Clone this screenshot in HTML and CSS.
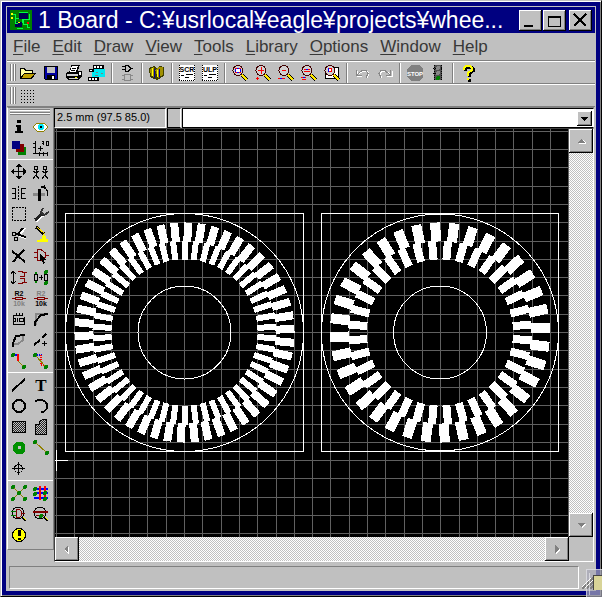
FILE: index.html
```html
<!DOCTYPE html>
<html lang="en">
<head>
<meta charset="utf-8">
<title>1 Board</title>
<link rel="stylesheet" href="styles.css">
</head>
<body>
<div class="window">
<div class="frame">
<header class="titlebar">
  <svg class="app-icon" viewBox="0 0 22 20"><path fill="#008000" d="M0 0h22v20H0z"/><path fill="#000050" d="M9 3h9v6H9zM5 12h7v5H5z"/><path fill="none" stroke="#00ff40" d="M2 4h3v9h3M9 2h9M19 4v5h-6v5h4v3h3M5 8h4M12 9v4M7 18h6"/><path fill="#ff0" d="M1 3h2v2H1zM1 7h2v2H1zM8 12h2v1H8z"/><path fill="red" d="M17 12h2v2h-2z"/></svg>
  <h1>1 Board - C:¥usrlocal¥eagle¥projects¥whee...</h1>
  <div class="window-buttons">
    <button class="raised" aria-label="Minimize"><svg viewBox="0 0 23 21"><path stroke="#000" stroke-width="2" d="M5 16h9"/></svg></button>
    <button class="raised" aria-label="Maximize"><svg viewBox="0 0 23 21"><path d="M5 6h13v11H5z" fill="#000"/><path d="M6 8h11v8H6z" fill="#c0c0c0"/></svg></button>
    <button class="raised close" aria-label="Close"><svg viewBox="0 0 23 21"><path stroke="#000" stroke-width="2" d="M5 4l12 12M17 4L5 16"/></svg></button>
  </div>
</header>
<nav class="menubar">
  <a href="#"><u>F</u>ile</a><a href="#"><u>E</u>dit</a><a href="#"><u>D</u>raw</a><a href="#"><u>V</u>iew</a><a href="#"><u>T</u>ools</a><a href="#"><u>L</u>ibrary</a><a href="#"><u>O</u>ptions</a><a href="#"><u>W</u>indow</a><a href="#"><u>H</u>elp</a>
</nav>
<div class="toolbar">
  <span class="grip"></span>
  <div class="group">
    <button aria-label="Open"><svg viewBox="0 0 20 18"><path fill="#000" d="M2 4h5l1 2h7v3h3l-4 6H2z"/><path fill="#ffffa0" d="M3 5h3l1 2h7v2H6l-3 4z"/><path fill="#c0a000" d="M6 10h10l-3 4H4z"/></svg></button>
    <button aria-label="Save"><svg viewBox="0 0 20 18"><path fill="#000" d="M3 2h14v14H4l-1-1z"/><path fill="#0000a0" d="M4 3h12v12H4z"/><path fill="#c0c0c0" d="M6 3h8v6H6z"/><path fill="#000" d="M6 11h8v4H6z"/><path fill="#fff" d="M11 12h2v3h-2z"/></svg></button>
    <button aria-label="Print"><svg viewBox="0 0 20 18"><path fill="#000" d="M7 1h9l-2 6h4v6l-4 3H4l-2-3V9l4-2z"/><path fill="#fff" d="M8 2h6l-2 6H6z"/><path stroke="#000" d="M8 4h4M7 6h4"/><path fill="#d0d0d0" d="M3 10h11v2H3zM5 14h9v1H5z"/><path fill="#fff" d="M15 8h2v3h-2z"/><path fill="#ff0" d="M11 13h2v1h-2z"/></svg></button>
    <button aria-label="CAM"><svg viewBox="0 0 20 18"><path fill="#00e8f0" d="M5 5h13v8H5z"/><path fill="#000" d="M6 1h11v4H6zM2 5h5v3H2zM1 13h11v4H1z"/><path fill="#fff" d="M7 2h2v2H7zM10 2h2v2h-2zM13 2h2v2h-2zM3 6h2v1H3zM2 14h2v2H2zM5 14h2v2H5zM8 14h2v2H8z"/><path stroke="#808080" d="M9 8h2m3 1h2m-8 2h3"/></svg></button>
  </div>
  <div class="group">
    <button aria-label="Schematic"><svg viewBox="0 0 20 18"><path fill="none" stroke="#000" d="M8 1.500v6h3l3-3-3-3zM5 2.500h3M5 5.500h3M14 4.500h2"/><path fill="none" stroke="#888" d="M7.500 10.500h6v6h-6zM5 11.500h2M5 15.500h2M14 11.500h2M14 15.500h2"/></svg></button>
  </div>
  <div class="group">
    <button aria-label="Library"><svg viewBox="0 0 20 18"><path fill="#404000" d="M2 4l5-2 3 2 3-2 4 1v9l-7 4-7-3z"/><path fill="#a09000" d="M3 5l4-2v10l-3-1zM8 6l4-3h4v8l-5 3z"/><path stroke="#ff0" d="M5.500 4v8M10.500 6v7"/><path stroke="#0000a0" d="M7.500 5v9M12.500 5v8"/></svg></button>
  </div>
  <div class="group">
    <button aria-label="Script"><svg viewBox="0 0 20 18"><path fill="#fff" d="M2 1h16v16H2z"/><path stroke="#000" stroke-dasharray="1 1" fill="none" d="M2.500 1v16M17.500 1v16M2 16.500h16"/><text class="tiny" x="10" y="8">SCR</text><path stroke="#000" d="M4 11.500h3M9 10.500h7M8 13.500h4"/></svg></button>
    <button aria-label="User program"><svg viewBox="0 0 20 18"><path fill="#fff" d="M2 1h16v16H2z"/><path stroke="#000" stroke-dasharray="1 1" fill="none" d="M2.500 1v16M17.500 1v16M2 16.500h16"/><text class="tiny" x="10" y="8">ULP</text><path stroke="#000" d="M4 11.500h3M9 10.500h7M8 13.500h4"/></svg></button>
  </div>
  <div class="group">
    <button aria-label="Zoom to fit"><svg viewBox="0 0 20 18"><use href="#lens"/><path fill="#fff" stroke="#00f" d="M5.500 4.500h5v4h-5z"/><path stroke="red" d="M5 4.500h2m2 0h2M5 8.500h2m2 0h2"/></svg></button>
    <button aria-label="Zoom in"><svg viewBox="0 0 20 18"><use href="#lens"/><path stroke="red" d="M5 6.500h6M8.500 3v7M3 14.500h3M4.500 13v3"/></svg></button>
    <button aria-label="Zoom out"><svg viewBox="0 0 20 18"><use href="#lens"/><path stroke="red" d="M6 6.500h4M2 14.500h7"/><path stroke="#00f" d="M4 14.500h2"/></svg></button>
    <button aria-label="Redraw"><svg viewBox="0 0 20 18"><use href="#lens"/><path stroke="red" d="M5 5.500h6M5 7.500h6M2 13.500h5M3 15.500h4"/><path stroke="#00f" d="M7 5.500h2M4 13.500h2"/></svg></button>
    <button aria-label="Zoom select"><svg viewBox="0 0 20 18"><path fill="#fff" stroke="#000" d="M3.500 3.500h13v11h-13z"/><use href="#lens"/><path fill="#fff" stroke="red" d="M6.500 4.500h3v3h-3z"/><path stroke="#00f" d="M6.500 4v4"/></svg></button>
  </div>
  <div class="group">
    <button aria-label="Undo"><svg viewBox="0 0 20 18"><g fill="none"><path stroke="#fff" d="M5 7v5h5M7 10l4-3h4l2 3-2 4"/><path stroke="#888" d="M4.500 6v5h5M5 11l5-4.500h4l2 3-2 4"/></g></svg></button>
    <button aria-label="Redo"><svg viewBox="0 0 20 18"><g fill="none"><path stroke="#fff" d="M17 7v5h-5M15 10l-4-3H7l-2 3 2 4"/><path stroke="#888" d="M15.500 6v5h-5M15 11l-5-4.500H6l-2 3 2 4"/></g></svg></button>
  </div>
  <div class="group">
    <button aria-label="Stop"><svg viewBox="0 0 20 18"><path fill="#808080" d="M6 1h8l4 4v8l-4 4H6l-4-4V5z"/><text class="tiny light" x="10" y="12">STOP</text></svg></button>
    <button aria-label="Go"><svg viewBox="0 0 20 18"><path fill="#505050" d="M6 1h8v15H6z"/><path fill="none" stroke="#000" stroke-dasharray="1 1" d="M6.500 1v15M13.500 1v15M5 4.500h10M5 9.500h10"/><circle cx="10" cy="4" r="2" fill="#888"/><circle cx="10" cy="9" r="2" fill="#888"/><circle cx="10" cy="14" r="2" fill="#008000"/></svg></button>
  </div>
  <div class="group">
    <button aria-label="Help"><svg viewBox="0 0 20 18"><path fill="none" stroke="#000" stroke-width="3" d="M7 7V5l2-2h4l2 2v2l-4 3v3M10 16h3"/><path fill="none" stroke="#ff0" stroke-width="2" d="M6 6V4l2-2h4l2 2v2l-4 3v3M9 15h2"/></svg></button>
  </div>
</div>
<div class="toolbar second">
  <span class="grip"></span>
  <button aria-label="Grid"><svg viewBox="0 0 20 18"><path stroke="#000" stroke-dasharray="1 2" d="M3 3.500h14M3 6.500h14M3 9.500h14M3 12.500h14M3 15.500h14"/></svg></button>
</div>
<main class="work">
  <aside class="palette">
    <span class="grip wide"></span>
    <div class="tools">
      <button aria-label="Info"><svg viewBox="0 0 20 18"><path fill="#000" d="M8 2h4v3H8zM7 7h5v6h2v2H6v-2h2V9H7z"/></svg></button>
      <button aria-label="Show"><svg viewBox="0 0 20 18"><path fill="#fff" stroke="#908000" d="M2 9l4-4h7l4 4-4 4H6z"/><circle cx="10" cy="9" r="3" fill="#00e8f8"/><path d="M9 8h2v2H9z"/></svg></button>
      <button aria-label="Display"><svg viewBox="0 0 20 18"><path fill="#008000" d="M9 8h8v8H9z"/><path fill="#800000" d="M7 5h8v8H7z"/><path fill="#000080" d="M3 2h8v8H3z"/></svg></button>
      <button aria-label="Mark"><svg viewBox="0 0 20 18"><path fill="none" stroke="#000" d="M4.500 2v13M2 14.500h15M2 4.500h2M2 8.500h2M8.500 13v4M12.500 13v4M16.500 13v4M7 9.500h5M9.500 7v5M10.500 2.500h2v2h-2M12.500 3v3M15.500 2.500h2v4h-2z"/></svg></button>
    </div>
    <div class="tools">
      <button aria-label="Move"><svg viewBox="0 0 20 18"><path stroke="#000" d="M3 8.500h14M9.500 2v13"/><path d="M9 1h1l3 3H6zM9 16h1l3-3H6zM2 8v1l3 3V5zM17 8v1l-3 3V5z"/></svg></button>
      <button aria-label="Copy"><svg viewBox="0 0 20 18"><g fill="none" stroke="#000"><path id="man" d="M3.500 3.500h3v3h-3zM5 7v5M2 8l3 2 3-2M5 12l-3 4M5 12l3 4"/><use href="#man" x="9"/></g></svg></button>
      <button aria-label="Mirror"><svg viewBox="0 0 20 18"><path fill="none" stroke="#000" d="M3 4.500h3.500v10H3M3 9.500h3M17 4.500h-4.500v10H17M13 9.500h3"/><path stroke="#000" stroke-dasharray="2 1" d="M9.500 2v15"/></svg></button>
      <button aria-label="Rotate"><svg viewBox="0 0 20 18"><path fill="#888" d="M2 9h12v3H2z"/><path fill="#000" d="M7 5h3v12H7zM9 3l5-2v4z"/><path fill="none" stroke="#000" d="M11 3.500l3 0 2 3v5"/></svg></button>
      <button aria-label="Group"><svg viewBox="0 0 20 18"><path fill="none" stroke="#000" stroke-dasharray="2 1" d="M3.500 2.500h13v13h-13z"/></svg></button>
      <button aria-label="Change"><svg viewBox="0 0 20 18"><path stroke="#fff" stroke-width="3" d="M5 16l7-6"/><path stroke="#222" stroke-width="3" d="M4 15l7-6"/><path fill="none" stroke="#333" stroke-width="2" d="M12 3l-2 4 3 3 5-3"/></svg></button>
      <button aria-label="Cut"><svg viewBox="0 0 20 18"><g fill="none" stroke="#000"><path stroke="#fff" stroke-width="2" d="M10 10l6-8M10 10l7 2"/><path stroke-width="2" d="M8 9l6-7M7 8l10 3"/><circle cx="5" cy="8" r="2"/><circle cx="7" cy="13" r="2"/></g></svg></button>
      <button aria-label="Paste"><svg viewBox="0 0 20 18"><path stroke="#000" stroke-width="3" d="M5 1l8 7"/><path stroke="#ffe000" d="M6 1l8 7"/><path fill="#ff0" d="M12 8l3 2v3h2v3H6v-2l5-1z"/></svg></button>
      <button aria-label="Delete"><svg viewBox="0 0 20 18"><path fill="none" stroke="#000" stroke-width="2" d="M3 4l6 5 7 6M15 3l-6 6-5 6"/></svg></button>
      <button aria-label="Add"><svg viewBox="0 0 20 18"><path fill="none" stroke="#800000" d="M6 2.500v11h4l4-3v-5l-4-3zM3 5.500h3M3 10.500h3M14 8.500h4"/><path d="M9 7l6 6h-2l1 3-2 1-1-4-2 1z"/></svg></button>
      <button aria-label="Pin swap"><svg viewBox="0 0 20 18"><path fill="none" stroke="#000" d="M4.500 3v13M2 6l2-3 3 3M2 13l2 3 3-3"/><path fill="none" stroke="#800000" d="M9 3.500h3l3 1v4h-4M9 15.500h3l3-1v-4h-4M15 4.500h3M15 14.500h3"/></svg></button>
      <button aria-label="Replace"><svg viewBox="0 0 20 18"><path fill="none" stroke="#000" d="M3.500 6.500h3v6h-3zM13.500 6.500h3v6h-3zM8 9.500h4M10.500 7v5"/><g fill="#008000"><circle cx="5" cy="5" r="1"/><circle cx="5" cy="14" r="1"/><circle cx="15" cy="4" r="2"/><circle cx="15" cy="15" r="2"/></g></svg></button>
      <button aria-label="Name"><svg viewBox="0 0 20 18"><text class="tiny" x="10" y="7">R2</text><path fill="none" stroke="#800000" d="M3 9.500h3M6.500 8.500h7v2h-7zM14 9.500h3"/><text class="tiny gray" x="10" y="17">10k</text></svg></button>
      <button aria-label="Value"><svg viewBox="0 0 20 18"><text class="tiny gray" x="10" y="7">R2</text><path fill="none" stroke="#800000" d="M3 9.500h3M6.500 8.500h7v2h-7zM14 9.500h3"/><text class="tiny" x="10" y="17">10k</text></svg></button>
      <button aria-label="Smash"><svg viewBox="0 0 20 18"><path fill="none" stroke="#000" d="M4.500 5.500h9M15.500 7v7h-11V5M4 8.500h2v3H4M7 3v2m3-2v2m3-2v2M8.500 8v4M10 8.500h4v3h-4z"/></svg></button>
      <button aria-label="Miter"><svg viewBox="0 0 20 18"><path fill="none" stroke="#888" stroke-width="2" d="M5 15V4h12"/><path fill="none" stroke="#000" stroke-width="2" d="M4 16v-4l6-7 7-1"/></svg></button>
      <button aria-label="Split"><svg viewBox="0 0 20 18"><path fill="none" stroke="#888" stroke-width="2" d="M5 13h4l5-4V4"/><path fill="none" stroke="#000" stroke-width="2" d="M4 16v-4l3-7 9-1"/></svg></button>
      <button aria-label="Optimize"><svg viewBox="0 0 20 18"><path stroke="#000" stroke-width="2" d="M3 14l6-5M11 7l4-4"/><path stroke="#000" d="M11 12.500h5M13.500 10v5"/></svg></button>
      <button aria-label="Route"><svg viewBox="0 0 20 18"><path fill="none" stroke="#00f" stroke-width="2" d="M4 3h5"/><path fill="none" stroke="red" stroke-width="2" d="M9 2v7"/><path stroke="#908000" d="M9 9l6 6"/><circle cx="4" cy="3" r="2" fill="#008000"/><circle cx="15" cy="15" r="2" fill="#008000"/></svg></button>
      <button aria-label="Ripup"><svg viewBox="0 0 20 18"><path fill="none" stroke="#00f" stroke-dasharray="1 1" stroke-width="2" d="M4 3h7"/><path fill="none" stroke="red" stroke-dasharray="1 1" stroke-width="2" d="M10 3v10h4"/><path stroke="#908000" d="M4 3l11 12"/><circle cx="4" cy="3" r="2" fill="#008000"/><circle cx="15" cy="15" r="2" fill="#008000"/></svg></button>
    </div>
    <div class="tools">
      <button aria-label="Wire"><svg viewBox="0 0 20 18"><path stroke="#000" stroke-width="2" d="M3 15L16 3"/></svg></button>
      <button aria-label="Text"><svg viewBox="0 0 20 18"><text class="letter" x="10" y="15">T</text></svg></button>
      <button aria-label="Circle"><svg viewBox="0 0 20 18"><circle cx="10" cy="9" r="6" fill="none" stroke="#000" stroke-width="2"/></svg></button>
      <button aria-label="Arc"><svg viewBox="0 0 20 18"><path fill="none" stroke="#000" stroke-width="2" d="M4 5c4-4 12-2 12 4 0 4-3 6-6 6"/></svg></button>
      <button aria-label="Rectangle"><svg viewBox="0 0 20 18"><path fill="url(#dither)" stroke="#000" d="M3.500 3.500h13v11h-13z"/></svg></button>
      <button aria-label="Polygon"><svg viewBox="0 0 20 18"><path fill="url(#dither)" stroke="#000" d="M4.500 16.500v-10h4v-3l3-2h4v15z"/></svg></button>
      <button aria-label="Via"><svg viewBox="0 0 20 18"><path fill="#009000" fill-rule="evenodd" d="M7 3h6l3 3v6l-3 3H7l-3-3V6zM9 7v3h3V7z"/></svg></button>
      <button aria-label="Signal"><svg viewBox="0 0 20 18"><path stroke="#908000" d="M4 3l12 11"/><circle cx="4" cy="3" r="2" fill="#008000"/><circle cx="16" cy="14" r="2" fill="#008000"/></svg></button>
      <button aria-label="Hole"><svg viewBox="0 0 20 18"><path fill="none" stroke="#000" d="M9.500 2v13M3 8.500h13"/><circle cx="9.500" cy="8.500" r="4" fill="none" stroke="#000"/></svg></button>
    </div>
    <div class="tools">
      <button aria-label="Ratsnest"><svg viewBox="0 0 20 18"><path stroke="#908000" d="M4 3l12 12M16 3L4 15"/><g fill="#008000"><circle cx="4" cy="3" r="2"/><circle cx="16" cy="3" r="2"/><circle cx="10" cy="9" r="2"/><circle cx="4" cy="15" r="2"/><circle cx="16" cy="15" r="2"/></g></svg></button>
      <button aria-label="Auto"><svg viewBox="0 0 20 18"><path fill="none" stroke="#00f" stroke-width="2" d="M3 5h14M3 9h14M3 14h14"/><path stroke="red" stroke-width="2" d="M9 2v14M14 2v14"/><g fill="#008000"><circle cx="4" cy="5" r="2"/><circle cx="4" cy="10" r="2"/><circle cx="14" cy="9" r="2"/><circle cx="14" cy="15" r="2"/></g></svg></button>
      <button aria-label="Electrical check"><svg viewBox="0 0 20 18"><circle cx="9" cy="8" r="6" fill="none" stroke="#000"/><path fill="none" stroke="#800000" d="M7.500 4.500h3l2 2v4l-2 2h-3zM12 8.500h4"/><path stroke="#008000" d="M2 6.500h5M2 10.500h5"/><path stroke="#000" stroke-width="2" d="M13 12l4 4"/><path stroke="#ff0" d="M14 12l3 3"/></svg></button>
      <button aria-label="Design check"><svg viewBox="0 0 20 18"><circle cx="9" cy="8" r="6" fill="none" stroke="#000"/><path stroke="#800000" stroke-width="2" d="M2 7h15"/><path stroke="#800000" d="M5 10.500h8"/><circle cx="10" cy="11" r="2" fill="#008000"/><path stroke="#000" stroke-width="2" d="M13 12l4 4"/><path stroke="#ff0" d="M14 12l3 3"/></svg></button>
      <button aria-label="Errors"><svg viewBox="0 0 20 18"><circle cx="10" cy="9" r="6.500" fill="#ff0" stroke="#000"/><path d="M9 4h3v6H9zM9 12h3v2H9z"/></svg></button>
    </div>
  </aside>
  <section class="editor">
    <div class="command-row">
      <output class="coords">2.5 mm (97.5 85.0)</output>
      <span class="spacer-box"></span>
      <div class="combo">
        <input type="text" aria-label="Command">
        <button class="raised" aria-label="Command history"><svg viewBox="0 0 15 15"><path d="M4 6h7l-3.500 4z"/></svg></button>
      </div>
    </div>
    <div class="viewport">
      <svg class="board" id="board"></svg>
      <div class="scrollbar vertical">
        <button class="raised" aria-label="Scroll up"><svg viewBox="0 0 24 24"><path fill="#fff" d="M9 15h8v-1l-3-3z"/><path fill="#808080" d="M8 14h8l-4-4z"/></svg></button>
        <button class="raised" aria-label="Scroll down"><svg viewBox="0 0 24 24"><path fill="#fff" d="M13 15l4-4H9z"/><path fill="#808080" d="M8 10h8l-4 4z"/></svg></button>
      </div>
      <div class="scrollbar">
        <button class="raised" aria-label="Scroll left"><svg viewBox="0 0 24 24"><path fill="#fff" d="M14 9v8h-1l-3-4z"/><path fill="#808080" d="M13 8v8l-4-4z"/></svg></button>
        <button class="raised" aria-label="Scroll right"><svg viewBox="0 0 24 24"><path fill="#fff" d="M11 17l4-4v-1l-4-3z"/><path fill="#808080" d="M10 8v8l4-4z"/></svg></button>
      </div>
    </div>
  </section>
</main>
<footer class="statusbar"><div class="status"></div></footer>
</div>
<svg class="resize" viewBox="0 0 20 28"><path fill="#a8a8b8" fill-opacity=".7" d="M4 0h16v28H4z"/><path stroke="#808080" stroke-width="2" d="M0 20L11 9M4 20l7-7M8 20l3-3"/><path stroke="#fff" d="M0 18L9 9M3 19l8-8"/><path fill="none" stroke="#fff" stroke-opacity=".5" d="M4.500 0v28M4 .5h16M7.500 4v22"/><path fill="#d8d498" d="M12 7h8v14h-8z"/><path stroke="#444" d="M11.500 6v15M11 6.500h9"/></svg>
</div>
<svg class="defs" aria-hidden="true">
  <defs>
    <pattern id="dither" width="2" height="2" patternUnits="userSpaceOnUse"><path fill="#c0c0c0" d="M0 0h2v2H0z"/><path fill="#222" d="M0 0h1v1H0zM1 1h1v1H1z"/></pattern>
    <g id="lens"><path stroke="#000" stroke-width="4" d="M12 11l5 5"/><path stroke="#ffe800" stroke-width="2" d="M12 11l5 5"/><circle cx="8" cy="6.500" r="5" fill="#d0d0d0" stroke="#400000"/></g>
  </defs>
</svg>
<script src="board.js"></script>
</body>
</html>
```
FILE: styles.css
```css
* { box-sizing: border-box; }

body {
  margin: 0;
  font-family: "Liberation Sans", Arial, sans-serif;
  color: #000;
}

button {
  padding: 0;
  border: 0;
  background: none;
  font: inherit;
}

svg { display: block; shape-rendering: crispEdges; }
.defs { position: absolute; width: 0; height: 0; }

.window {
  position: relative;
  height: 100vh;
  padding: 1px;
  background: #000080;
  border: 1px solid #c0c0c0;
  border-right-color: #000;
  border-bottom-color: #000;
  box-shadow: inset 1px 1px #fff, inset -1px -1px #808080;
}

.frame {
  display: flex;
  flex-direction: column;
  height: 100%;
  border: 4px solid transparent;
  background: #c0c0c0 padding-box;
  padding: 1px;
}

.raised {
  background: #c0c0c0;
  box-shadow: inset -1px -1px #000, inset 1px 1px #fff, inset -2px -2px #808080;
}

.titlebar {
  display: flex;
  align-items: center;
  gap: 6px;
  height: 26px;
  padding: 0 3px;
  background: #000080;
}
.app-icon { width: 22px; height: 20px; flex: none; }
.titlebar h1 {
  flex: 1;
  min-width: 0;
  margin: 0;
  overflow: hidden;
  font-size: 23px;
  font-weight: 400;
  line-height: 26px;
  white-space: nowrap;
  color: #fff;
}
.window-buttons { display: flex; gap: 1px; }
.window-buttons button { width: 23px; height: 21px; }
.window-buttons .close { margin-left: 2px; }

.menubar {
  display: flex;
  gap: 12px;
  height: 28px;
  padding: 0 6px;
  border-bottom: 1px solid #808080;
}
.menubar a {
  font-size: 17px;
  line-height: 28px;
  color: #383838;
  text-decoration: none;
}
.menubar u { text-underline-offset: 2px; }

.toolbar {
  display: flex;
  align-items: center;
  height: 23px;
  padding-left: 3px;
  border-top: 1px solid #fff;
  border-bottom: 1px solid #808080;
}
.toolbar button { width: 23px; height: 20px; }
.toolbar svg { width: 20px; height: 18px; margin: 0 auto; }
.group { display: flex; padding-right: 3px; }
.group + .group { padding-left: 3px; border-left: 1px solid #808080; box-shadow: inset 1px 0 #fff; }

.grip {
  width: 6px;
  height: 17px;
  border: 1px solid #808080;
  border-width: 0 1px;
  background: linear-gradient(90deg, #fff 1px, #c0c0c0 1px 2px, #808080 2px 3px, #fff 3px);
}

.work { display: flex; flex: 1; min-height: 0; padding-right: 1px; }

.palette {
  align-self: flex-start;
  width: 47px;
  padding-bottom: 3px;
  border: 1px solid #808080;
  border-left: 1px solid #fff;
}
.grip.wide {
  display: block;
  width: 40px;
  height: 6px;
  margin: 1px 0 1px 2px;
  border-width: 1px 0;
  background: linear-gradient(#fff 1px, #c0c0c0 1px 2px, #808080 2px 3px, #fff 3px);
}
.tools {
  display: grid;
  grid-template-columns: 22px 22px;
  grid-auto-rows: 21px;
  padding-bottom: 1px;
}
.tools + .tools {
  padding-top: 1px;
  border-top: 1px solid #fff;
}
.palette svg { width: 20px; height: 18px; margin: 0 auto; }

.tiny {
  font: 700 7px "Liberation Sans", sans-serif;
  text-anchor: middle;
}
.tiny.gray { fill: #808080; }
.tiny.light { font-size: 6px; fill: #fff; }
.letter {
  font: 700 17px "Liberation Serif", serif;
  text-anchor: middle;
}

.editor {
  display: flex;
  flex: 1;
  flex-direction: column;
  min-width: 0;
  border-top: 1px solid #808080;
}
.command-row { display: flex; gap: 1px; height: 20px; }
.coords {
  width: 112px;
  padding-left: 2px;
  border: 1px solid #000;
  border-right-color: #fff;
  border-bottom-color: #fff;
  font-size: 11px;
  line-height: 17px;
  white-space: nowrap;
}
.spacer-box { width: 14px; border: 1px solid #000; border-right-color: #fff; }
.combo {
  display: flex;
  flex: 1;
  align-items: center;
  padding: 1px;
  border: 1px solid #000;
  border-right-color: #fff;
  background: #fff;
}
.combo input {
  flex: 1;
  min-width: 0;
  height: 15px;
  padding: 0 3px;
  border: 0;
  outline: 0;
  font-size: 11px;
}
.combo button { width: 15px; height: 15px; }

.viewport {
  display: grid;
  grid-template-columns: 1fr 24px;
  grid-template-rows: 1fr 24px;
  flex: 1;
  min-height: 0;
  border: 1px solid #404040;
  border-right-color: #fff;
  border-bottom-color: #fff;
}
.board { width: 100%; height: 100%; background: #000; overflow: hidden; }
.scrollbar {
  display: flex;
  justify-content: space-between;
  background: repeating-conic-gradient(#fff 0 25%, #c0c0c0 0 50%) 0 0 / 2px 2px;
}
.scrollbar.vertical { flex-direction: column; }
.scrollbar button { width: 24px; height: 24px; }

.statusbar { height: 28px; padding: 4px 16px 1px 2px; }
.status {
  height: 23px;
  border: 1px solid #808080;
  border-right-color: #fff;
  border-bottom-color: #fff;
}

.resize {
  position: absolute;
  right: -1px;
  bottom: -1px;
  width: 20px;
  height: 28px;
}

.grid-line { stroke: #606060; }
.outline { fill: none; stroke: #fff; }
.tooth { stroke: #fff; }
```
FILE: board.js
```js
const board = document.getElementById("board");

function add(name, attrs) {
  const node = document.createElementNS("http://www.w3.org/2000/svg", name);
  for (const key in attrs) node.setAttribute(key, attrs[key]);
  board.appendChild(node);
}

// 2.5 mm grid, anchored on the centre of the first wheel
const cx = 129.5, cy = 203.5, pitch = 18.3;
for (let k = -12; k < 120; k++) {
  const x = Math.floor(cx + k * pitch) + 0.5;
  const y = Math.floor(cy + k * pitch) + 0.5;
  add("line", { class: "grid-line", x1: x, x2: x, y1: 0, y2: "100%" });
  add("line", { class: "grid-line", x1: 0, x2: "100%", y1: y, y2: y });
}

function ring(x, y, count, offset, r1, r2, width) {
  for (let k = 0; k < count; k++) {
    add("line", {
      class: "tooth", x1: x, x2: x, y1: y - r1, y2: y - r2, "stroke-width": width,
      transform: `rotate(${offset + k * 360 / count} ${x} ${y})`
    });
  }
}

function wheel(x, radius, count, outerOffset, innerOffset, outerWidth, innerWidth) {
  add("rect", { class: "outline", x: x - radius, y: cy - 119, width: 2 * radius, height: 238 });
  add("circle", { class: "outline", cx: x, cy: cy, r: radius });
  add("circle", { class: "outline", cx: x, cy: cy, r: 46.5 });
  ring(x, cy, count, outerOffset, 91, 110, outerWidth);
  ring(x, cy, count, innerOffset, 73, 92, innerWidth);
}

wheel(cx, 119, 50, 1.8, 0, 8, 6);
wheel(385, 118.5, 36, -2.5, 5, 10, 8);

// origin cross
add("path", { class: "outline", d: "M1.500 321v21M0 331.500h13" });
```
